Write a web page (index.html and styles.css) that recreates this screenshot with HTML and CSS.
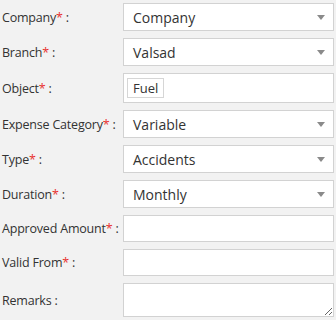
FILE: index.html
```html
<!DOCTYPE html>
<html lang="en">
<head>
    <meta charset="UTF-8">
    <meta name="viewport" content="width=device-width, initial-scale=1.0">
    <title>Expense Form</title>
    <link rel="stylesheet" href="styles.css">
</head>
<body>
    <div class="form">
        <div class="row">
            <label>Company<span class="req">*</span> :</label>
            <div class="field select">Company<span class="arrow"></span></div>
        </div>
        <div class="row">
            <label>Branch<span class="req">*</span> :</label>
            <div class="field select">Valsad<span class="arrow"></span></div>
        </div>
        <div class="row">
            <label>Object<span class="req">*</span> :</label>
            <div class="field tags"><span class="tag">Fuel</span></div>
        </div>
        <div class="row">
            <label>Expense Category<span class="req">*</span> :</label>
            <div class="field select">Variable<span class="arrow"></span></div>
        </div>
        <div class="row">
            <label>Type<span class="req">*</span> :</label>
            <div class="field select">Accidents<span class="arrow"></span></div>
        </div>
        <div class="row">
            <label>Duration<span class="req">*</span> :</label>
            <div class="field select">Monthly<span class="arrow"></span></div>
        </div>
        <div class="row">
            <label>Approved Amount<span class="req">*</span> :</label>
            <input class="field input" type="text">
        </div>
        <div class="row">
            <label>Valid From<span class="req">*</span> :</label>
            <input class="field input" type="text">
        </div>
        <div class="row">
            <label>Remarks :</label>
            <textarea class="field area"></textarea>
        </div>
    </div>
</body>
</html>
```

FILE: styles.css
```css
body {
    margin: 0;
    background-color: #f2f2f2;
    font-family: "Open Sans", sans-serif;
    color: #333;
}
.form {
    display: flex;
    flex-direction: column;
    gap: 7px;
    padding: 3px 2px 0 2px;
}
.row {
    display: flex;
    align-items: center;
}
.row label {
    width: 121px;
    flex-shrink: 0;
    font-size: 12.5px;
    white-space: nowrap;
    letter-spacing: -0.2px;
}
.req {
    color: #e8312f;
}
.field {
    box-sizing: border-box;
    width: 211px;
    background: white;
    border: 1px solid #d2d2d2;
    font-family: "Open Sans", sans-serif;
    color: #333;
}
.select {
    height: 28px;
    display: flex;
    align-items: center;
    justify-content: space-between;
    padding: 0 8px 0 9px;
    font-size: 14px;
}
.arrow {
    width: 0;
    height: 0;
    border-left: 4px solid transparent;
    border-right: 4px solid transparent;
    border-top: 5px solid #8a8a8a;
}
.tags {
    height: 30px;
    display: flex;
    align-items: center;
    padding: 0 3px;
}
.tag {
    border: 1px solid #d6d6d6;
    padding: 0 5px;
    font-size: 13px;
    line-height: 18px;
}
.input {
    height: 27px;
    margin: 0;
    outline: none;
}
.area {
    height: 34px;
    margin: 0;
    resize: vertical;
}
```
